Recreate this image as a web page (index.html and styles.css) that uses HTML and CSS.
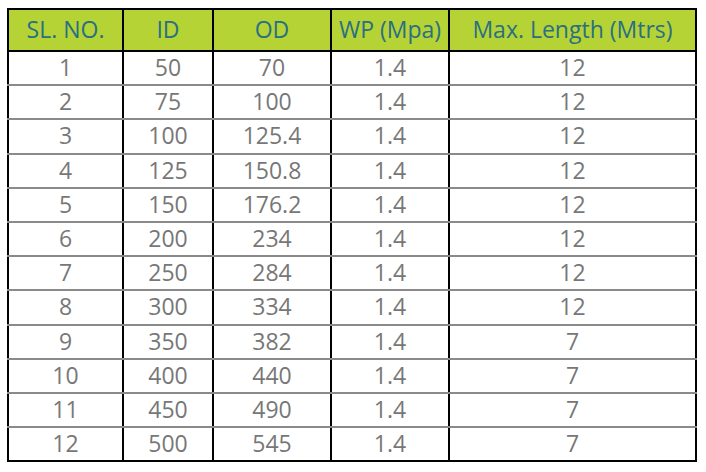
FILE: index.html
```html
<!DOCTYPE html>
<html>
<head>
<meta charset="utf-8">
<link rel="stylesheet" href="styles.css">
</head>
<body>
<table class="spec">
<colgroup>
<col class="c1"><col class="c2"><col class="c3"><col class="c4"><col class="c5">
</colgroup>
<thead>
<tr><th>SL. NO.</th><th>ID</th><th>OD</th><th>WP (Mpa)</th><th>Max. Length (Mtrs)</th></tr>
</thead>
<tbody>
<tr><td>1</td><td>50</td><td>70</td><td>1.4</td><td>12</td></tr>
<tr><td>2</td><td>75</td><td>100</td><td>1.4</td><td>12</td></tr>
<tr><td>3</td><td>100</td><td>125.4</td><td>1.4</td><td>12</td></tr>
<tr><td>4</td><td>125</td><td>150.8</td><td>1.4</td><td>12</td></tr>
<tr><td>5</td><td>150</td><td>176.2</td><td>1.4</td><td>12</td></tr>
<tr><td>6</td><td>200</td><td>234</td><td>1.4</td><td>12</td></tr>
<tr><td>7</td><td>250</td><td>284</td><td>1.4</td><td>12</td></tr>
<tr><td>8</td><td>300</td><td>334</td><td>1.4</td><td>12</td></tr>
<tr><td>9</td><td>350</td><td>382</td><td>1.4</td><td>7</td></tr>
<tr><td>10</td><td>400</td><td>440</td><td>1.4</td><td>7</td></tr>
<tr><td>11</td><td>450</td><td>490</td><td>1.4</td><td>7</td></tr>
<tr><td>12</td><td>500</td><td>545</td><td>1.4</td><td>7</td></tr>
</tbody>
</table>
</body>
</html>
```
FILE: styles.css
```css
html, body {
  margin: 0;
  padding: 0;
  background: #ffffff;
}
body {
  padding: 8px 0 0 7px;
  font-family: "Open Sans", "Liberation Sans", sans-serif;
}
.spec {
  border-collapse: collapse;
  width: 688px;
  border: 2px solid #000;
  table-layout: fixed;
}
.c1 { width: 115px; }
.c2 { width: 90px; }
.c3 { width: 118px; }
.c4 { width: 118px; }
.c5 { width: 247px; }
.spec th {
  background: #b5d335;
  color: #2a6f82;
  font-weight: 400;
  font-size: 23px;
  height: 38px;
  line-height: 30px;
  padding: 0 0 2px 0;
  border: 2px solid #000;
  text-align: center;
  white-space: nowrap;
}
.spec td {
  color: #777777;
  font-size: 23px;
  height: 30.2px;
  padding: 0 0 2px 0;
  text-align: center;
  border-left: 2px solid #000;
  border-right: 2px solid #000;
  border-top: 2px solid #8a8a8a;
  border-bottom: 2px solid #8a8a8a;
  line-height: 28px;
}
.spec tbody tr:first-child td {
  border-top: 2px solid #000;
}
.spec tbody tr:last-child td {
  border-bottom: 2px solid #000;
}
```
